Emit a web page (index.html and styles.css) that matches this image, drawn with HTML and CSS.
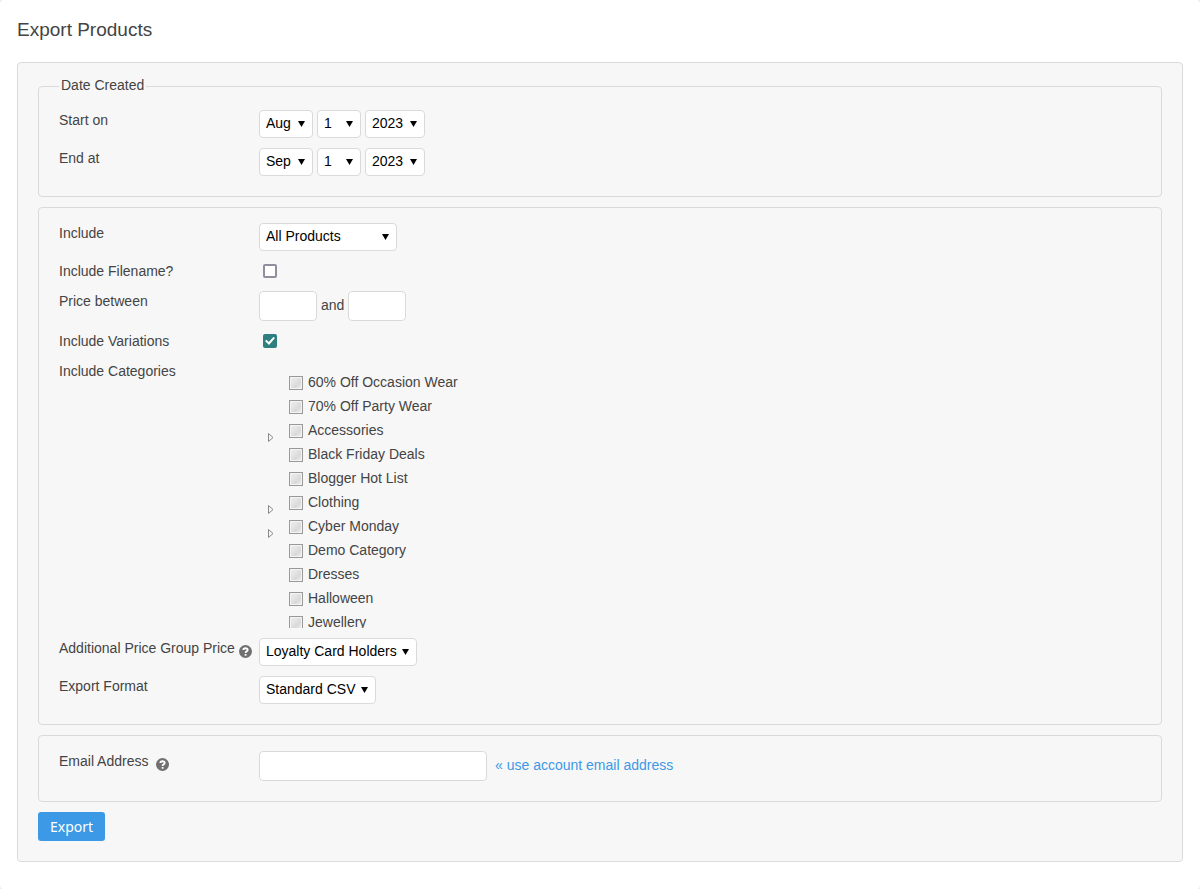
FILE: index.html
```html
<!DOCTYPE html>
<html lang="en">
<head>
    <meta charset="UTF-8">
    <meta name="viewport" content="width=device-width, initial-scale=1.0">
    <title>Export Products</title>
    <link rel="stylesheet" href="styles.css">
</head>
<body>
    <div class="page">
        <h1>Export Products</h1>
        <form class="panel">
            <fieldset class="with-legend">
                <legend>Date Created</legend>
                <div class="row">
                    <label class="name" for="startMonth">Start on</label>
                    <div class="field">
                        <span class="select month"><select id="startMonth"><option>Aug</option><option>Sep</option></select></span>
                        <span class="select day"><select id="startDay" aria-label="Start day"><option>1</option><option>2</option></select></span>
                        <span class="select year"><select id="startYear" aria-label="Start year"><option>2023</option><option>2022</option></select></span>
                    </div>
                </div>
                <div class="row">
                    <label class="name" for="endMonth">End at</label>
                    <div class="field">
                        <span class="select month"><select id="endMonth"><option>Sep</option><option>Aug</option></select></span>
                        <span class="select day"><select id="endDay" aria-label="End day"><option>1</option><option>2</option></select></span>
                        <span class="select year"><select id="endYear" aria-label="End year"><option>2023</option><option>2022</option></select></span>
                    </div>
                </div>
            </fieldset>

            <fieldset>
                <div class="row">
                    <label class="name" for="include">Include</label>
                    <div class="field">
                        <span class="select products"><select id="include"><option>All Products</option></select></span>
                    </div>
                </div>
                <div class="row">
                    <label class="name" for="filename">Include Filename?</label>
                    <div class="field"><input type="checkbox" class="check" id="filename"></div>
                </div>
                <div class="row">
                    <label class="name" for="priceMin">Price between</label>
                    <div class="field">
                        <input type="text" class="price" id="priceMin">
                        <label class="beside" for="priceMax">and</label>
                        <input type="text" class="price" id="priceMax">
                    </div>
                </div>
                <div class="row">
                    <label class="name" for="variations">Include Variations</label>
                    <div class="field"><input type="checkbox" class="check" id="variations" checked></div>
                </div>
                <div class="row">
                    <span class="name">Include Categories</span>
                    <ul class="tree">
                        <li><label><input type="checkbox">60% Off Occasion Wear</label></li>
                        <li><label><input type="checkbox">70% Off Party Wear</label></li>
                        <li><svg class="toggle" width="6" height="9" viewBox="0 0 6 9"><path d="M.5.5v8l4.5-4z"/></svg><label><input type="checkbox">Accessories</label></li>
                        <li><label><input type="checkbox">Black Friday Deals</label></li>
                        <li><label><input type="checkbox">Blogger Hot List</label></li>
                        <li><svg class="toggle" width="6" height="9" viewBox="0 0 6 9"><path d="M.5.5v8l4.5-4z"/></svg><label><input type="checkbox">Clothing</label></li>
                        <li><svg class="toggle" width="6" height="9" viewBox="0 0 6 9"><path d="M.5.5v8l4.5-4z"/></svg><label><input type="checkbox">Cyber Monday</label></li>
                        <li><label><input type="checkbox">Demo Category</label></li>
                        <li><label><input type="checkbox">Dresses</label></li>
                        <li><label><input type="checkbox">Halloween</label></li>
                        <li><label><input type="checkbox">Jewellery</label></li>
                    </ul>
                </div>
                <div class="row">
                    <label class="name" for="priceGroup">Additional Price Group Price
                        <svg class="help" viewBox="0 0 12 12"><circle cx="6" cy="6" r="6"/><path d="M4 4.6C4 2.4 8 2.5 8 4.5 8 5.9 6.1 5.7 6.1 7.3"/><path d="M6.1 8.3v1.6"/></svg>
                    </label>
                    <div class="field">
                        <span class="select"><select id="priceGroup"><option>Loyalty Card Holders</option></select></span>
                    </div>
                </div>
                <div class="row">
                    <label class="name" for="format">Export Format</label>
                    <div class="field">
                        <span class="select"><select id="format"><option>Standard CSV</option></select></span>
                    </div>
                </div>
            </fieldset>

            <fieldset>
                <div class="row">
                    <label class="name" for="email">Email Address
                        <svg class="help spaced" viewBox="0 0 12 12"><circle cx="6" cy="6" r="6"/><path d="M4 4.6C4 2.4 8 2.5 8 4.5 8 5.9 6.1 5.7 6.1 7.3"/><path d="M6.1 8.3v1.6"/></svg>
                    </label>
                    <div class="field">
                        <input type="text" class="email" id="email">
                        <a class="beside" href="#">« use account email address</a>
                    </div>
                </div>
            </fieldset>

            <button type="submit">Export</button>
        </form>
    </div>
</body>
</html>
```

FILE: styles.css
```css
* {
    box-sizing: border-box;
}

html {
    background: #ededed;
}

body {
    margin: 0;
    font-family: "Liberation Sans", Arial, sans-serif;
    font-size: 14px;
    line-height: 20px;
    color: #444;
}

.page {
    min-height: 100vh;
    padding: 18px 17px 27px;
    background: #fff;
    border-radius: 4px;
}

h1 {
    margin: 0 0 20px;
    font-size: 19px;
    font-weight: normal;
    line-height: 24px;
}

.panel {
    padding: 12px 20px 20px;
    background: #f7f7f7;
    border: 1px solid #dadada;
    border-radius: 4px;
}

fieldset {
    min-width: 0;
    margin: 0 0 10px;
    padding: 15px 20px 20px;
    border: 1px solid #dadada;
    border-radius: 4px;
}

legend {
    padding: 0 2px 2px;
}

.with-legend {
    padding-top: 13px;
}

.row {
    display: flex;
    align-items: flex-start;
}

.row + .row {
    margin-top: 10px;
}

.name {
    flex: 0 0 200px;
    white-space: nowrap;
}

.field {
    display: flex;
    align-items: center;
    gap: 4px;
    min-height: 20px;
}

.beside {
    padding-bottom: 2px;
}

/* drop-downs */
.select {
    display: block;
    position: relative;
}

.select::after {
    content: "";
    position: absolute;
    top: 11px;
    right: 8px;
    width: 7px;
    height: 6px;
    background: #000;
    clip-path: polygon(0 0, 100% 0, 50% 100%);
    pointer-events: none;
}

select {
    display: block;
    width: 100%;
    height: 28px;
    padding: 0 19px 2px 6px;
    appearance: none;
    border: 1px solid #dadada;
    border-radius: 4px;
    background: #fff;
    color: #000;
    font: inherit;
}

.month {
    width: 54px;
}

.day {
    width: 44px;
}

.year {
    width: 60px;
}

.products {
    width: 138px;
}

/* text boxes */
.price,
.email {
    height: 30px;
    padding: 0 6px;
    border: 1px solid #dadada;
    border-radius: 4px;
    background: #fff;
    font: inherit;
}

.price {
    width: 58px;
}

.email {
    width: 228px;
    margin-right: 4px;
}

/* tick boxes */
.check {
    display: grid;
    place-items: center;
    width: 14px;
    height: 14px;
    margin: 0 4px;
    appearance: none;
    border: 2px solid #8f8f9d;
    border-radius: 2px;
    background: #fff;
}

.check:checked {
    border-color: #2f7f80;
    background: #2f7f80;
}

.check:checked::after {
    content: "";
    width: 10px;
    height: 8px;
    background: #fff;
    clip-path: polygon(0 50%, 15% 35%, 38% 62%, 84% 0, 100% 14%, 40% 100%);
}

/* category tree */
.tree {
    height: 267px;
    margin: 0;
    padding: 10px 0 0 30px;
    list-style: none;
    overflow: hidden;
}

.tree li {
    position: relative;
    height: 24px;
}

.tree label {
    display: flex;
    align-items: center;
    gap: 5px;
    height: 24px;
    padding-bottom: 2px;
}

.tree input {
    width: 14px;
    height: 14px;
    margin: 2px 0 0;
    appearance: none;
    border: 1px solid #999;
    background: linear-gradient(315deg, #f4f4f4, #dadada 35%, #f0f0f0);
    box-shadow: inset 0 0 0 1px #f4f4f4;
}

.toggle {
    position: absolute;
    top: 14px;
    left: -21px;
    fill: none;
    stroke: #888;
}

.help {
    width: 13px;
    height: 13px;
    vertical-align: -5px;
    fill: #707070;
}

.help path {
    fill: none;
    stroke: #fff;
    stroke-width: 1.7;
}

.spaced {
    margin-left: 4px;
}

a {
    color: #3c99e6;
    text-decoration: none;
}

button {
    display: block;
    height: 29px;
    padding: 0 12px;
    border: 0;
    border-radius: 3px;
    background: #3c99e6;
    color: #fff;
    font-family: "Noto Sans", sans-serif;
    font-size: 14px;
    cursor: pointer;
}
```
